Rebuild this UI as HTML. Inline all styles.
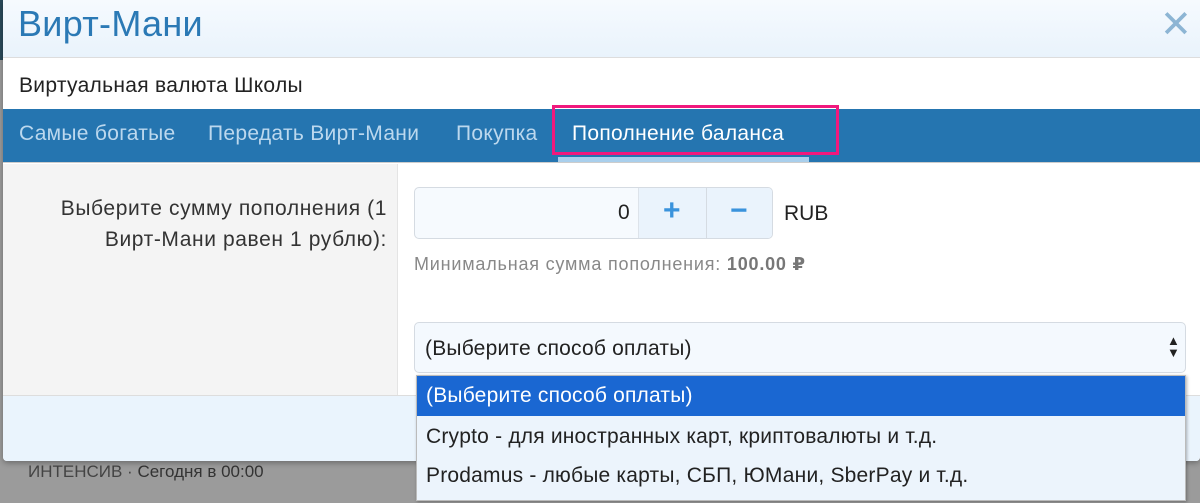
<!DOCTYPE html>
<html><head><meta charset="utf-8"><style>
*{box-sizing:border-box;margin:0;padding:0}
body{width:1200px;height:503px;overflow:hidden;background:#9b9b9b;font-family:"Liberation Sans","DejaVu Sans",sans-serif;position:relative}
.abs{position:absolute;white-space:nowrap}
.nav{font-size:21px;letter-spacing:.3px}
</style></head><body>
<div class="abs" style="left:0;top:0;width:3px;height:60px;background:#2a4a5a"></div>
<div class="abs" style="left:28px;top:462px;font-size:17px;color:#444">ИНТЕНСИВ · <span style="color:#333">Сегодня в 00:00</span></div>
<div class="abs" style="left:3px;top:0;width:1197px;height:461px;background:#fff;border-radius:0 0 4px 4px;overflow:hidden;box-shadow:0 2px 6px rgba(0,0,0,.3)">
  <div class="abs" style="left:0;top:0;width:1197px;height:58px;background:linear-gradient(#f6fafe,#e9f3fc);border-bottom:1px solid #ddd"></div>
  <div class="abs" style="left:15px;top:3px;font-size:36px;letter-spacing:.3px;color:#2b79b5">Вирт-Мани</div>
  <div class="abs" style="left:1157px;top:2px;font-size:38px;color:#8db5d4;font-weight:bold">✕</div>
  <div class="abs" style="left:16px;top:74px;font-size:21px;letter-spacing:.3px;color:#222">Виртуальная валюта Школы</div>
  <div class="abs" style="left:0;top:109px;width:1197px;height:54px;background:#2575b0;border-bottom:1px solid #ccc"></div>
  <div class="abs nav" style="left:16px;top:122px;color:#bcd8ee">Самые богатые</div>
  <div class="abs nav" style="left:205px;top:122px;color:#bcd8ee">Передать Вирт-Мани</div>
  <div class="abs nav" style="left:453px;top:122px;color:#bcd8ee">Покупка</div>
  <div class="abs nav" style="left:569px;top:122px;color:#fff">Пополнение баланса</div>
  <div class="abs" style="left:555px;top:157px;width:251px;height:5px;background:#a9cfec"></div>
  <div class="abs" style="left:549px;top:105px;width:287px;height:50px;border:3px solid #f0197d"></div>
  <div class="abs" style="left:0;top:164px;width:395px;height:231px;background:#f4f4f4;border-right:1px solid #e4e4e4"></div>
  <div class="abs" style="left:20px;top:193px;width:364px;text-align:right;font-size:21px;letter-spacing:.6px;line-height:31px;color:#333">Выберите сумму пополнения (1<br>Вирт-Мани равен 1 рублю):</div>
  <div class="abs" style="left:411px;top:187px;width:359px;height:52px;border:1px solid #d5dbe2;border-radius:5px;background:#f6fafe;overflow:hidden">
    <div class="abs" style="left:223px;top:0;width:1px;height:52px;background:#dde3ea"></div>
    <div class="abs" style="left:224px;top:0;width:135px;height:52px;background:#eaf3fc"></div>
    <div class="abs" style="left:291px;top:0;width:1px;height:52px;background:#d5dbe2"></div>
    <div class="abs" style="left:203px;top:13px;font-size:21px;color:#222">0</div>
    <div class="abs" style="left:248px;top:6px;font-size:30px;font-weight:bold;color:#3a93dc">+</div>
    <div class="abs" style="left:315px;top:6px;font-size:30px;font-weight:bold;color:#3a93dc">−</div>
  </div>
  <div class="abs" style="left:781px;top:202px;font-size:21px;color:#222">RUB</div>
  <div class="abs" style="left:411px;top:254px;font-size:18px;letter-spacing:.8px;color:#888">Минимальная сумма пополнения: <b style="color:#777">100.00 ₽</b></div>
  <div class="abs" style="left:411px;top:322px;width:772px;height:51px;border:1px solid #d5dbe2;border-radius:5px;background:#f4f9fe"></div>
  <div class="abs" style="left:422px;top:337px;font-size:21px;letter-spacing:.2px;color:#222">(Выберите способ оплаты)</div>
  <div class="abs" style="left:1164px;top:335px;font-size:13px;line-height:12px;color:#222">▲<br>▼</div>
  <div class="abs" style="left:0;top:395px;width:1197px;height:66px;background:#eaf4fd;border-top:1px solid #ddd"></div>
</div>
<div class="abs" style="left:416px;top:375px;width:770px;height:126px;background:#ecf4fc;border:1px solid #bbb;box-shadow:1px 1px 3px rgba(0,0,0,.3)">
  <div style="height:40px;background:#1a67d2;color:#fff;font-size:21px;letter-spacing:.2px;padding:8px 0 0 9px">(Выберите способ оплаты)</div>
  <div style="height:41px;color:#222;font-size:21px;letter-spacing:.2px;padding:9px 0 0 9px">Crypto - для иностранных карт, криптовалюты и т.д.</div>
  <div style="height:41px;color:#222;font-size:21px;letter-spacing:.2px;padding:7px 0 0 9px">Prodamus - любые карты, СБП, ЮМани, SberPay и т.д.</div>
</div>
</body></html>
